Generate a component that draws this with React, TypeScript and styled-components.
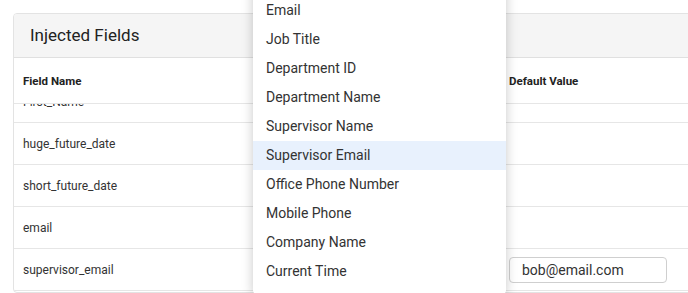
import React from "react";
import styled, { createGlobalStyle } from "styled-components";

const Global = createGlobalStyle`
  html, body { margin: 0; padding: 0; background: #fff; }
  body { font-family: Roboto, "Noto Sans", sans-serif; color: #333; }
`;

const Page = styled.div`
  position: relative;
  height: 293px;
  overflow: hidden;
  padding: 13px 0 0 13px;
  box-sizing: border-box;
`;

const Card = styled.div`
  width: 800px;
  border: 1px solid #e3e3e3;
  border-radius: 4px;
  background: #fff;
  overflow: hidden;
`;

const CardHeader = styled.div`
  height: 44px;
  display: flex;
  align-items: center;
  padding-left: 16px;
  padding-bottom: 1px;
  box-sizing: border-box;
  background: #f5f5f5;
  border-bottom: 1px solid #e0e0e0;
  font-size: 17px;
  color: #222;
`;

const Row = styled.div<{ $head?: boolean }>`
  display: grid;
  grid-template-columns: 240px 246px 1fr;
  align-items: center;
  height: ${(p) => (p.$head ? 45 : 41)}px;
  border-bottom: 1px solid #e6e6e6;
  font-size: ${(p) => (p.$head ? 11.5 : 12)}px;
  font-weight: ${(p) => (p.$head ? 700 : 400)};
  color: ${(p) => (p.$head ? "#222" : "#333")};
`;

const Cell = styled.div`
  padding-left: 9px;
  white-space: nowrap;
`;

const Body = styled.div`
  height: 188px;
  overflow: hidden;
`;

const Scroller = styled.div`
  margin-top: -23px;
`;

const Input = styled.div`
  width: 158px;
  height: 26px;
  box-sizing: border-box;
  border: 1px solid #cfcfcf;
  border-radius: 4px;
  margin-left: 9px;
  display: flex;
  align-items: center;
  padding-left: 12px;
  font-size: 14px;
  color: #333;
`;

const Menu = styled.div`
  position: absolute;
  left: 253px;
  top: -70px;
  width: 253px;
  padding: 8px 0;
  background: #fff;
  box-shadow: 0 2px 12px rgba(0, 0, 0, 0.22);
  border-radius: 4px;
`;

const Item = styled.div<{ $active?: boolean }>`
  height: 29px;
  display: flex;
  align-items: center;
  padding-left: 13px;
  padding-bottom: 1px;
  box-sizing: border-box;
  font-size: 14px;
  color: #333;
  background: ${(p) => (p.$active ? "#e8f1fd" : "transparent")};
`;

const rows = [
  "First_Name",
  "huge_future_date",
  "short_future_date",
  "email",
  "supervisor_email",
];

const items = [
  "First Name",
  "Last Name",
  "Email",
  "Job Title",
  "Department ID",
  "Department Name",
  "Supervisor Name",
  "Supervisor Email",
  "Office Phone Number",
  "Mobile Phone",
  "Company Name",
  "Current Time",
];

export default function App() {
  return (
    <>
      <Global />
      <Page>
        <Card>
          <CardHeader>Injected Fields</CardHeader>
          <Row $head>
            <Cell>Field Name</Cell>
            <Cell />
            <Cell>Default Value</Cell>
          </Row>
          <Body>
            <Scroller>
              {rows.map((r) => (
                <Row key={r}>
                  <Cell>{r}</Cell>
                  <Cell />
                  <div>{r === "supervisor_email" && <Input>bob@email.com</Input>}</div>
                </Row>
              ))}
            </Scroller>
          </Body>
        </Card>
        <Menu>
          {items.map((i) => (
            <Item key={i} $active={i === "Supervisor Email"}>
              {i}
            </Item>
          ))}
        </Menu>
      </Page>
    </>
  );
}
